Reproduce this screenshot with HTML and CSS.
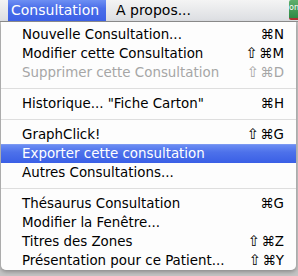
FILE: index.html
```html
<!DOCTYPE html>
<html lang="fr">
<head>
  <meta charset="UTF-8" />
  <title>Consultation</title>
  <link rel="stylesheet" href="styles.css">
</head>
<body>
  <div class="menubar">
    <div class="menubar-item active">Consultation</div>
    <div class="menubar-item">A propos...</div>
    <div class="app-badge">on</div>
  </div>

  <div class="menu">
    <div class="menu-row"><span>Nouvelle Consultation...</span><span class="keys">⌘N</span></div>
    <div class="menu-row"><span>Modifier cette Consultation</span><span class="keys"><span class="shift">⇧</span>⌘M</span></div>
    <div class="menu-row disabled"><span>Supprimer cette Consultation</span><span class="keys"><span class="shift">⇧</span>⌘D</span></div>
    <div class="menu-sep"></div>
    <div class="menu-row"><span>Historique... "Fiche Carton"</span><span class="keys">⌘H</span></div>
    <div class="menu-sep"></div>
    <div class="menu-row"><span>GraphClick!</span><span class="keys"><span class="shift">⇧</span>⌘G</span></div>
    <div class="menu-row selected"><span>Exporter cette consultation</span></div>
    <div class="menu-row"><span>Autres Consultations...</span></div>
    <div class="menu-sep"></div>
    <div class="menu-row"><span>Thésaurus Consultation</span><span class="keys">⌘G</span></div>
    <div class="menu-row"><span>Modifier la Fenêtre...</span></div>
    <div class="menu-row"><span>Titres des Zones</span><span class="keys"><span class="shift">⇧</span>⌘Z</span></div>
    <div class="menu-row"><span>Présentation pour ce Patient...</span><span class="keys"><span class="shift">⇧</span>⌘Y</span></div>
  </div>
</body>
</html>
```

FILE: styles.css
```css
* {
  box-sizing: border-box;
}

html, body {
  margin: 0;
  padding: 0;
  width: 298px;
  height: 276px;
  overflow: hidden;
}

body {
  background: #c4c4c4;
  font-family: 'DejaVu Sans', 'Liberation Sans', sans-serif;
  font-size: 13.4px;
  color: #000;
}

/* top menu bar */
.menubar {
  display: flex;
  align-items: stretch;
  height: 22px;
  padding-left: 8px;
  font-size: 14px;
  background: linear-gradient(#f4f4f4, #dcdee2);
  border-bottom: 1px solid #8e8e8e;
}

.menubar-item {
  display: flex;
  align-items: center;
  padding: 0 8px 0 10px;
  line-height: 21px;
}

.menubar-item.active {
  padding: 0 4px 0 3px;
  width: 98px;
  color: #fff;
  background: linear-gradient(#6d8ff3, #4a6ee9 40%, #3c60e6);
}

.app-badge {
  margin-left: auto;
  width: 9px;
  height: 20px;
  padding-top: 3px;
  overflow: hidden;
  font-size: 8px;
  line-height: 10px;
  color: #fff;
  background: linear-gradient(#5fae6c, #2f8a45);
  border-bottom: 2px solid #a33;
  border-radius: 2px 0 0 2px;
}

/* dropdown */
.menu {
  margin: 0 2px 0 1px;
  padding: 3px 0 0;
  background: rgba(255, 255, 255, 0.97);
  border-radius: 0 0 5px 5px;
  box-shadow: 0 2px 4px rgba(0, 0, 0, 0.3);
}

.menu-row {
  display: flex;
  justify-content: space-between;
  height: 19px;
  line-height: 19px;
  padding: 0 12px 0 21px;
  white-space: nowrap;
}

.menu-row.disabled {
  color: #a6a6a6;
}

.menu-row.selected {
  color: #fff;
  background: linear-gradient(#6a8cf3, #4d71ea 40%, #3a5fe6);
  border-top: 1px solid #7c99f2;
  line-height: 17px;
}

.keys {
  text-align: right;
}

.shift {
  font-size: 15px;
  margin-right: 1px;
}

.menu-sep {
  height: 12px;
  padding-top: 6px;
}

.menu-sep::after {
  content: '';
  display: block;
  height: 1px;
  background: #dedede;
}
```
